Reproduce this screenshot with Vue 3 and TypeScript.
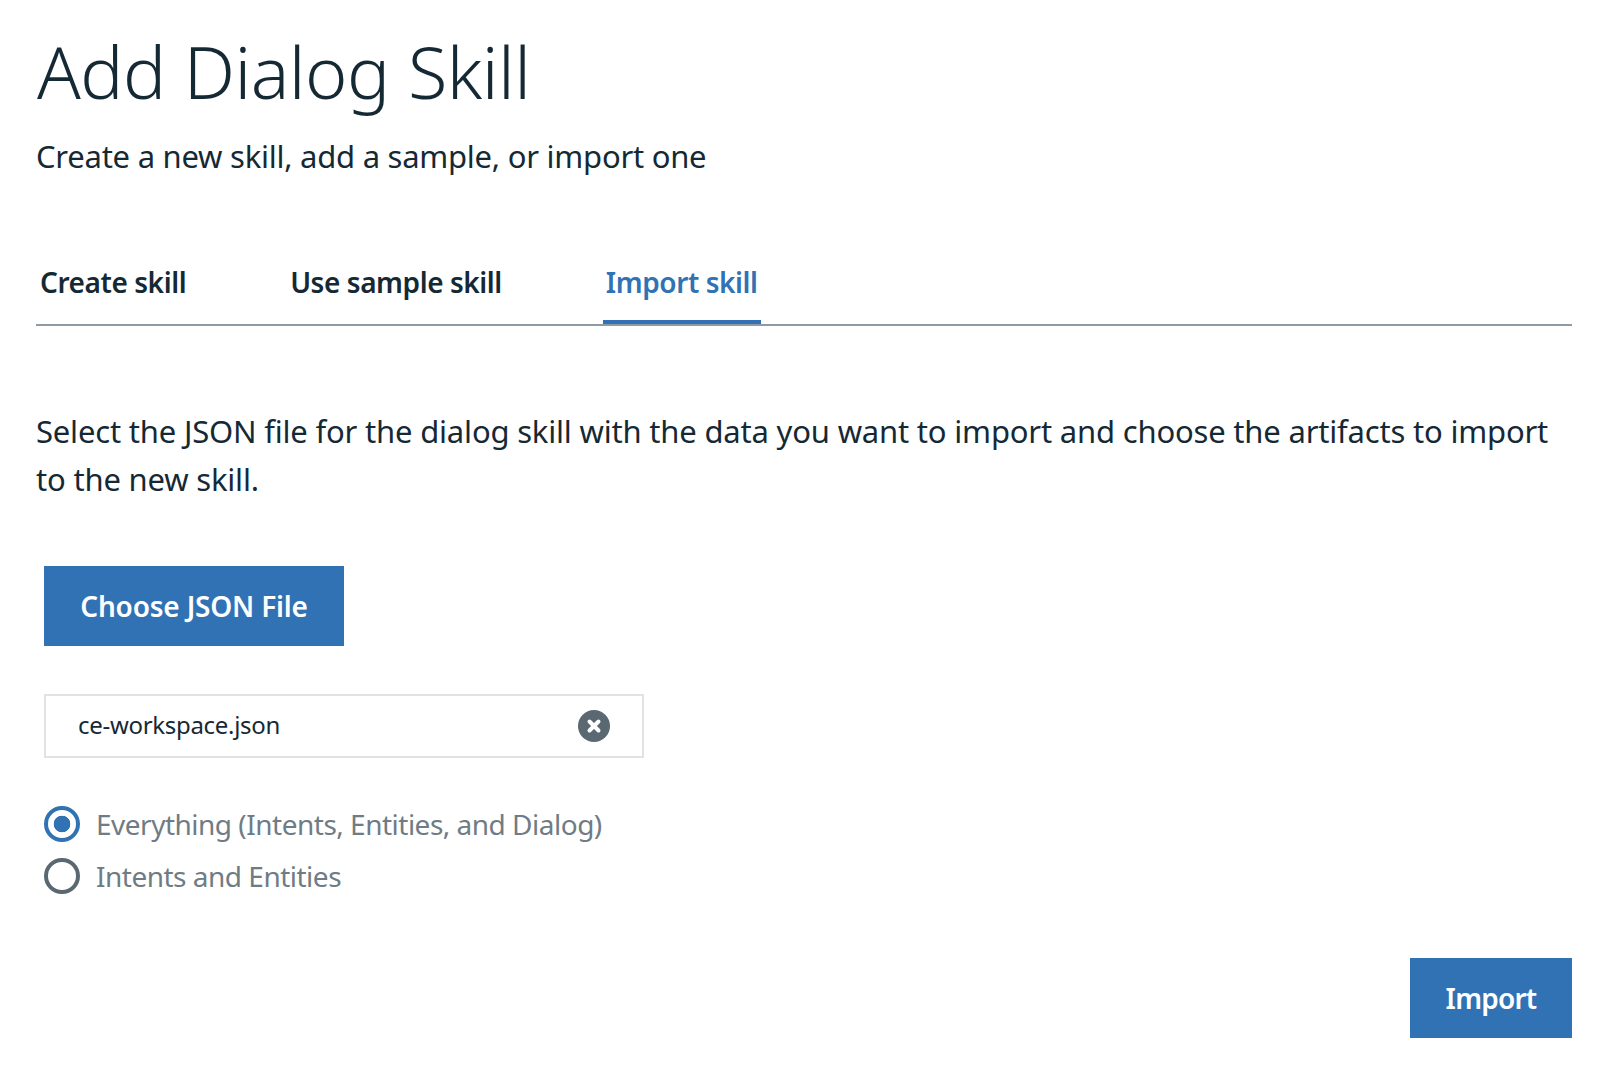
<script setup lang="ts">
const tabs: { label: string; active: boolean }[] = [
  { label: 'Create skill', active: false },
  { label: 'Use sample skill', active: false },
  { label: 'Import skill', active: true },
]
</script>

<template>
  <main class="page">
    <h1 class="title">Add Dialog Skill</h1>
    <p class="subtitle">Create a new skill, add a sample, or import one</p>

    <nav class="tabs">
      <a v-for="t in tabs" :key="t.label" class="tab" :class="{ active: t.active }">{{ t.label }}</a>
    </nav>

    <p class="desc">Select the JSON file for the dialog skill with the data you want to import and choose the artifacts to import to the new skill.</p>

    <section class="form">
      <button class="btn choose">Choose JSON File</button>
      <div class="file">
        <span class="file-name">ce-workspace.json</span>
        <svg class="clear" width="32" height="32" viewBox="0 0 32 32">
          <circle cx="16" cy="16" r="16" fill="#5a6872" />
          <path d="M11.5 11.5l9 9M20.5 11.5l-9 9" stroke="#fff" stroke-width="4" stroke-linecap="round" />
        </svg>
      </div>
      <div class="radios">
        <label class="radio"><span class="dot on"></span><span class="radio-text">Everything (Intents, Entities, and Dialog)</span></label>
        <label class="radio"><span class="dot"></span><span class="radio-text">Intents and Entities</span></label>
      </div>
    </section>

    <div class="actions">
      <button class="btn import">Import</button>
    </div>
  </main>
</template>

<style scoped>
.page {
  width: 1610px;
  height: 1092px;
  box-sizing: border-box;
  padding: 21px 38px 0 36px;
  font-family: "Noto Sans", "Open Sans", sans-serif;
  color: #152935;
  overflow: hidden;
  background: #fff;
}
.title {
  margin: 0 0 0 1px;
  font-size: 72px;
  line-height: 100px;
  font-weight: 300;
  letter-spacing: -0.5px;
}
.subtitle {
  margin: 13px 0 0;
  font-size: 31px;
  line-height: 44px;
  font-weight: 400;
  letter-spacing: -0.25px;
}
.tabs {
  display: flex;
  margin-top: 75px;
  height: 71px;
  padding-left: 1px;
  border-bottom: 2px solid #8c9ba5;
}
.tab {
  height: 67px;
  padding: 0 3px;
  margin-right: 98px;
  font-size: 28px;
  line-height: 58px;
  font-weight: 600;
  letter-spacing: -0.43px;
  white-space: nowrap;
}
.tab.active {
  color: #3072b3;
  border-bottom: 4px solid #3072b3;
}
.desc {
  margin: 81px 0 0;
  font-size: 31px;
  line-height: 48px;
  font-weight: 400;
  letter-spacing: -0.19px;
}
.form {
  margin: 63px 0 0 8px;
}
.btn {
  display: block;
  border: 0;
  border-radius: 0;
  height: 80px;
  color: #fff;
  background: #3072b3;
  font-family: inherit;
  font-size: 28px;
  font-weight: 600;
}
.choose {
  width: 300px;
  letter-spacing: -0.2px;
}
.file {
  margin-top: 48px;
  width: 600px;
  height: 64px;
  box-sizing: border-box;
  border: 2px solid #dfe3e6;
  display: flex;
  align-items: center;
  justify-content: space-between;
  padding: 0 32px 0 32px;
}
.file-name {
  font-size: 24px;
  letter-spacing: -0.3px;
  padding-bottom: 4px;
}
.clear {
  display: block;
}
.radios {
  margin-top: 48px;
  display: flex;
  flex-direction: column;
  gap: 16px;
}
.radio {
  display: flex;
  align-items: center;
  height: 36px;
}
.dot {
  width: 36px;
  height: 36px;
  box-sizing: border-box;
  border-radius: 50%;
  border: 4px solid #5a6872;
  flex: none;
}
.dot.on {
  border-color: #3072b3;
  background: radial-gradient(circle, #3072b3 0 8px, #fff 8.6px);
}
.radio-text {
  margin-left: 16px;
  font-size: 28px;
  letter-spacing: -0.5px;
  color: #6f7c85;
}
.actions {
  display: flex;
  justify-content: flex-end;
  margin-top: 64px;
}
.import {
  width: 162px;
  letter-spacing: -0.8px;
}
</style>

<style>
html, body { margin: 0; background: #fff; }
</style>
